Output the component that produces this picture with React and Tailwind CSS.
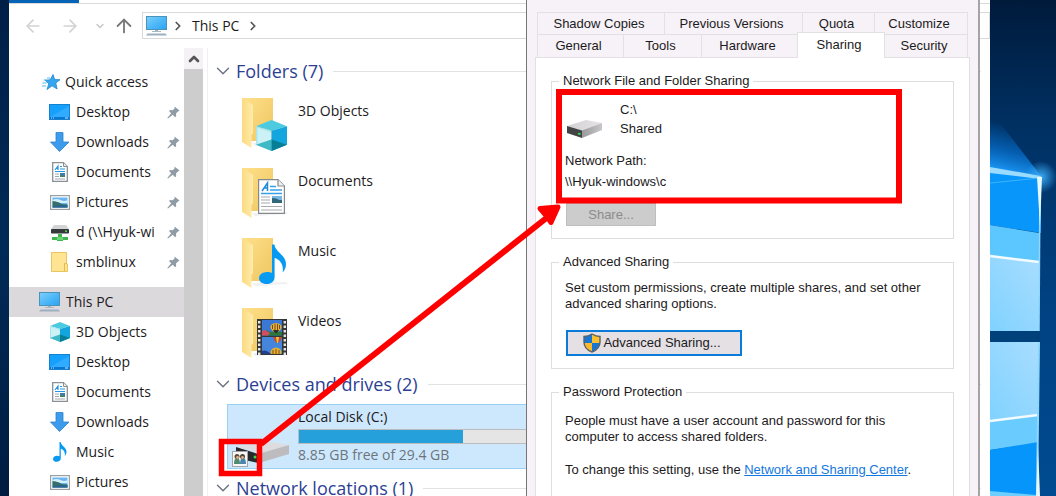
import { ArrowLeft, ArrowRight, ArrowUp, ChevronDown, ChevronRight, ChevronUp } from 'lucide-react'

function MonitorIcon({ className }) {
  return (
    <svg className={className} viewBox="0 0 21 20">
      <defs>
        <linearGradient id="screen" x1="0" y1="0" x2="1" y2="1">
          <stop offset="0" stopColor="#7fd0fb" />
          <stop offset="0.5" stopColor="#4fb9f8" />
          <stop offset="1" stopColor="#2ba3f2" />
        </linearGradient>
      </defs>
      <rect x="0.5" y="0.5" width="20" height="13" fill="url(#screen)" stroke="#4b93b8" />
      <rect x="9" y="14" width="3" height="1" fill="#9fb4c0" />
      <rect x="6" y="15" width="9" height="1" fill="#a9bac5" />
      <path d="M0 19.500l1.500-2h18l1.500 2z" fill="#9bb0c0" />
    </svg>
  )
}

function StarIcon({ className }) {
  return (
    <svg className={className} viewBox="0 0 18 16">
      <path d="M11 .5l1.700 5 5.300.2-4.200 3.400 1.300 5.900-5-3.200L5 15.500l1.800-5.700L3 6.200l5.200-.4z" fill="#35a5ee" stroke="#1e86d2" strokeWidth=".8" />
      <path d="M5 4h3M1.500 6h3M.5 9h4M0 12h4" stroke="#5cb9f3" />
    </svg>
  )
}

function DesktopIcon({ className }) {
  return (
    <svg className={className} viewBox="0 0 21 16">
      <rect x=".5" y=".5" width="20" height="15" fill="#15a0fb" stroke="#1681cf" />
      <path d="M1 13L20 2v11z" fill="#30abff" />
      <rect x="1" y="13" width="19" height="2" fill="#0878d3" />
      <path d="M2 14h1M4 14h1M16 14h3" stroke="#bfe5ff" />
    </svg>
  )
}

function DownloadIcon({ className }) {
  return (
    <svg className={className} viewBox="0 0 20 20">
      <path d="M6 .5h7v9.500h6L9.500 19.500.5 10H6z" fill="#3d9bed" stroke="#2b80cd" strokeWidth=".8" />
    </svg>
  )
}

function DocumentIcon({ className }) {
  return (
    <svg className={className} viewBox="0 0 16 20">
      <path d="M.7.7h10.800l3.800 3.800v14.800H.7z" fill="#fff" stroke="#8a9093" strokeWidth="1.300" />
      <path d="M11.500.7v3.800h3.800" fill="#e8eaeb" stroke="#8a9093" />
      <path d="M3 8l3-4v4M4 6.500h2M8 4.500h2M8 7h5M3 9.500h10" stroke="#2495e4" strokeWidth="1.200" fill="none" />
      <path d="M3 12h4M3 14.500h4M3 17h10" stroke="#9ba7b3" />
      <rect x="8" y="11" width="5" height="4" fill="#3c7fae" />
      <path d="M8 15v-2l5 1v1z" fill="#42835c" />
    </svg>
  )
}

function PictureIcon({ className }) {
  return (
    <svg className={className} viewBox="0 0 20 15">
      <rect x=".6" y=".6" width="18.800" height="13.800" fill="#fff" stroke="#999fa3" strokeWidth="1.200" />
      <rect x="2.500" y="2.500" width="15" height="10" fill="#68b5ef" />
      <path d="M2.500 5q4-2 8 0t7 0v3h-15z" fill="#d6effd" />
      <path d="M2.500 6q7 1 9 3l6 .5v3h-15z" fill="#356f6c" />
      <path d="M2.500 11.500q8-2 15-1v2h-15z" fill="#2c6396" />
    </svg>
  )
}

function NetDriveIcon({ className }) {
  return (
    <svg className={className} viewBox="0 0 18 17">
      <path d="M3 1h12l3 4H0z" fill="#d2d4d6" />
      <rect y="5" width="18" height="4.500" rx=".8" fill="#34383b" />
      <path d="M14 7.200h2" stroke="#5df35d" strokeWidth="1.200" />
      <path d="M7 10h4v3h6v3h-5v1H6v-1H1v-3h6z" fill="#3fb751" />
      <path d="M6 13h6v3H6z" fill="#68d473" />
    </svg>
  )
}

function SmallFolderIcon({ className }) {
  return (
    <svg className={className} viewBox="0 0 17 20">
      <path d="M.5.5h15V12h1v7.500H.5z" fill="#ffe493" stroke="#e7c65f" />
      <path d="M13.500 19V11.500h2.500" fill="none" stroke="#e2bd4e" />
    </svg>
  )
}

function CubeIcon({ className }) {
  return (
    <svg className={className} viewBox="0 0 20 20">
      <path d="M0 4L10 0l10 4-10 3z" fill="#4ccbe0" />
      <path d="M0 4l10 3v13L0 16z" fill="#a8e6ef" />
      <path d="M1 5l9 3v4.500l-9 3z" fill="#cdf2f6" />
      <path d="M20 4l-10 3v13l10-4z" fill="#12a5de" />
      <path d="M0 16l10-3.500V20z" fill="#3fb9c6" />
      <path d="M20 16l-10-3.500V20z" fill="#067f96" />
    </svg>
  )
}

function NoteIcon({ className }) {
  return (
    <svg className={className} viewBox="0 0 14 20">
      <path d="M6.500 0h1.200c.5 4 5.800 5.200 5.800 9.800 0 1.700-.6 3.200-1.700 4.200.7-3.800-1.300-6.500-4-7.200v9.500c0 2.200-1.800 3.500-4 3.500S0 18.600 0 16.900s1.800-3.100 4-3.100c1 0 1.800.2 2.500.5z" fill="#069af3" />
    </svg>
  )
}

function PinIcon({ className }) {
  return (
    <svg className={className} viewBox="0 0 13 13">
      <path d="M7.500.5L12.500 4.500 11 5.500l-2 2 .2 2.700-1 1L5.700 8.800 1 12.500.3 12l3.900-4.700L2 5l1-1 2.700.2 2-2z" fill="#8f9ca6" />
    </svg>
  )
}

function FilmIcon({ className }) {
  return (
    <svg className={className} viewBox="0 0 30 36">
      <rect width="30" height="36" fill="#343638" />
      <path d="M2.200 2v34M27.800 2v34" stroke="#e7e7e7" strokeWidth="2.400" strokeDasharray="2.500 2" />
      <rect x="5" y="1" width="20" height="15.500" fill="#3b78d6" />
      <rect x="5" y="18" width="20" height="17" fill="#4585dc" />
      <path d="M5 13l4-2 5 2 6-1 5 1v3.500H5z" fill="#277b3b" />
      <path d="M5 12l3-1 5 3-2 2.500H5z" fill="#d74c64" />
      <path d="M13.500 8c0-5 11-5 11 0 0 3-3.500 4.500-4 6h-3c-.5-1.500-4-3-4-6z" fill="#e8b32a" />
      <path d="M15.500 6v4M18 5v6M20.500 5v6M22.500 6v4" stroke="#7c4a20" />
      <path d="M16 11h6l-1.500 3h-3z" fill="#30302f" />
      <path d="M16 18h9q-1 4-4 6h-1q-3-2-4-6z" fill="#c44a32" />
      <path d="M19 18h3l-1 6h-1z" fill="#efc83a" />
      <path d="M13.500 34c0-7 11-7 11 0l-1 1h-9z" fill="#e8b32a" />
      <path d="M16 31v4M19 30v5M22 31v4" stroke="#7c4a20" />
      <path d="M5 32q4-2 9 3H5z" fill="#223f89" />
    </svg>
  )
}

function LargeDocumentIcon({ className }) {
  return (
    <svg className={className} viewBox="0 0 27 35">
      <path d="M.6.600h19.400l6.400 6.400v27.400H.6z" fill="#fff" stroke="#85898c" strokeWidth="1.200" />
      <path d="M20 .6V7h6.400" fill="#eef0f1" stroke="#85898c" strokeWidth="1.200" />
      <path d="M4 12L9.500 4v8M6 9h4" fill="none" stroke="#2089dc" strokeWidth="1.500" />
      <path d="M12 7.500h6M12 11h12M3 14.500h21" stroke="#37a1e8" strokeWidth="1.300" />
      <path d="M3 18h9M3 21h9M3 24h9M3 27.500h21M3 31h21" stroke="#a5a9ad" strokeWidth="1.200" />
      <rect x="14" y="17" width="10" height="7" fill="#79b7e2" />
      <path d="M14 19q5 0 7 2h3v3H14z" fill="#31677a" />
    </svg>
  )
}

function FolderIcon({ overlay: Overlay, overlayClass }) {
  return (
    <div className="relative h-[54px] w-[48px] shrink-0">
      <svg className="h-[54px] w-[48px]" viewBox="0 0 48 54">
        <defs>
          <linearGradient id="folderBack" x1="0" y1="0" x2="1" y2="1">
            <stop offset="0" stopColor="#ffe08a" />
            <stop offset="1" stopColor="#eec661" />
          </linearGradient>
          <linearGradient id="folderFront" x1="0" y1="0" x2="1" y2="0">
            <stop offset="0" stopColor="#fcdb80" />
            <stop offset="1" stopColor="#ffebac" />
          </linearGradient>
        </defs>
        <path d="M10 46l34-1 2 2-33 2z" fill="#f1f1f1" />
        <path d="M0 1h31v43H9z" fill="url(#folderBack)" />
        <path d="M0 1l11 7v28l-1.500 2v13L0 45z" fill="url(#folderFront)" />
      </svg>
      <Overlay className={overlayClass} />
    </div>
  )
}

function DiskIcon({ className }) {
  return (
    <svg className={className} viewBox="0 0 36 18">
      <defs>
        <linearGradient id="diskTop" x1="0" y1="0" x2="1" y2="0">
          <stop offset="0" stopColor="#d4d1d4" />
          <stop offset="1" stopColor="#e6e3e6" />
        </linearGradient>
        <linearGradient id="diskSide" x1="0" y1="0" x2="1" y2="0">
          <stop offset="0" stopColor="#9a999c" />
          <stop offset="1" stopColor="#c8c6c9" />
        </linearGradient>
      </defs>
      <path d="M0 6L19 0l16 3-20 8z" fill="url(#diskTop)" />
      <path d="M15 10.500L35 3v7l-20 8z" fill="url(#diskSide)" />
      <path d="M0 6l15 4.500V18L0 13z" fill="#414344" />
      <path d="M11 13.500l2.500.7" stroke="#3fe04a" strokeWidth="1.800" />
    </svg>
  )
}

function SharedDiskIcon({ className }) {
  return (
    <svg className={className} viewBox="0 0 58 26">
      <path d="M4 5L40 0l17 3-28 8z" fill="#dedcde" />
      <path d="M26 12l31-9v9L27 21z" fill="#bdbbbe" />
      <path d="M4 5l22 7v9L4 16z" fill="#27292a" />
      <circle cx="23" cy="15" r="1.500" fill="#37e047" />
      <rect x=".5" y="9.500" width="15" height="15" fill="#f7f7f7" stroke="#a5a5a5" />
      <path d="M2 22q0-6 3-6t3 6z" fill="#4e8b70" />
      <path d="M8 22q0-6 3-6t3 6z" fill="#4a86ab" />
      <circle cx="5" cy="14.500" r="2.500" fill="#5f4b36" />
      <circle cx="10.500" cy="14.500" r="2.500" fill="#4c4434" />
      <circle cx="5.500" cy="15.500" r="1.400" fill="#e1b28d" />
      <circle cx="10.500" cy="15.500" r="1.400" fill="#e1b28d" />
    </svg>
  )
}

function ShieldIcon({ className }) {
  return (
    <svg className={className} viewBox="0 0 18 20">
      <path d="M9 1Q5 3.500 1 3.500V10h8z" fill="#1976d2" />
      <path d="M9 1q4 2.500 8 2.500V10H9z" fill="#fbc02d" />
      <path d="M1 10h8v9Q2 16 1 10z" fill="#fbb92a" />
      <path d="M9 10h8q-1 6-8 9z" fill="#1976d2" />
      <path d="M9 1Q5 3.500 1 3.500V9q0 7 8 10 8-3 8-10V3.500Q13 3.500 9 1z" fill="none" stroke="#59636b" strokeWidth="1.400" />
    </svg>
  )
}

function Wallpaper() {
  return (
    <svg className="absolute top-0 right-0 h-[496px] w-[66px]" viewBox="0 0 66 496">
      <defs>
        <linearGradient id="night" x1="0" y1="0" x2="0" y2="1">
          <stop offset="0" stopColor="#001a3b" />
          <stop offset="0.25" stopColor="#003062" />
          <stop offset="0.6" stopColor="#004181" />
          <stop offset="1" stopColor="#004b91" />
        </linearGradient>
        <linearGradient id="glow" x1="0" y1="120" x2="-12" y2="168" gradientUnits="userSpaceOnUse">
          <stop offset="0" stopColor="#0878dc" stopOpacity="0" />
          <stop offset="0.5" stopColor="#0878dc" stopOpacity="0.6" />
          <stop offset="1" stopColor="#1ea0ff" />
        </linearGradient>
        <radialGradient id="flare" cx="51" cy="177" r="16" gradientUnits="userSpaceOnUse">
          <stop offset="0" stopColor="#3aa9f5" />
          <stop offset="1" stopColor="#3aa9f5" stopOpacity="0" />
        </radialGradient>
        <linearGradient id="pane" x1="0" y1="1" x2="1" y2="0">
          <stop offset="0" stopColor="#7fd2ff" />
          <stop offset="1" stopColor="#a9ddff" />
        </linearGradient>
      </defs>
      <rect width="66" height="496" fill="url(#night)" />
      <path d="M0 110L51 176 0 168z" fill="url(#glow)" />
      <rect x="35" y="161" width="31" height="32" fill="url(#flare)" />
      <path d="M0 167l51 9v57L0 225z" fill="#0996fb" />
      <path d="M0 167l51 9-1 3L0 173z" fill="#9adbff" />
      <path d="M0 183l50-5" stroke="#37b6ff" />
      <path d="M0 225l49 8v29l-49-6z" fill="#5cc6ff" />
      <path d="M0 256l49 6v69H0z" fill="url(#pane)" />
      <path d="M0 256l49 6" stroke="#f3fbff" strokeWidth="2.500" />
      <path d="M50 177l-1 154" stroke="#8fd7ff" strokeWidth="1.500" />
      <path d="M47 177h5l-2 50z" fill="#e6f8ff" />
      <rect y="331" width="50" height="11" fill="#00407b" />
      <path d="M0 342h49l-1 73-48 6z" fill="url(#pane)" />
      <path d="M0 421l48-6v28l-48 7z" fill="#6acbff" />
      <path d="M0 450l48-8-2 54H0z" fill="#0696fb" />
      <path d="M0 421l48-6" stroke="#f3fbff" strokeWidth="2.500" />
      <path d="M49 342l-2 154" stroke="#8fd7ff" strokeWidth="2" />
      <path d="M46 496l2-50 2 50z" fill="#e6f8ff" />
      <path d="M0 491l46 4v1H0z" fill="#6ccfff" />
    </svg>
  )
}

const quickAccess = [
  { label: 'Desktop', icon: DesktopIcon, size: 'h-[16px] w-[21px]' },
  { label: 'Downloads', icon: DownloadIcon, size: 'h-5 w-5' },
  { label: 'Documents', icon: DocumentIcon, size: 'h-5 w-4' },
  { label: 'Pictures', icon: PictureIcon, size: 'h-[15px] w-5' },
  { label: 'd (\\\\Hyuk-wi', icon: NetDriveIcon, size: 'h-[17px] w-[18px]' },
  { label: 'smblinux', icon: SmallFolderIcon, size: 'h-5 w-[17px]' },
]

const thisPc = [
  { label: '3D Objects', icon: CubeIcon, size: 'h-5 w-5' },
  { label: 'Desktop', icon: DesktopIcon, size: 'h-[16px] w-[21px]' },
  { label: 'Documents', icon: DocumentIcon, size: 'h-5 w-4' },
  { label: 'Downloads', icon: DownloadIcon, size: 'h-5 w-5' },
  { label: 'Music', icon: NoteIcon, size: 'h-5 w-[14px]' },
  { label: 'Pictures', icon: PictureIcon, size: 'h-[15px] w-5' },
]

const folders = [
  { label: '3D Objects', overlay: CubeIcon, overlayClass: 'absolute left-[14px] top-[23px] h-[31px] w-[31px]' },
  { label: 'Documents', overlay: LargeDocumentIcon, overlayClass: 'absolute left-[16px] top-[12px] h-[35px] w-[27px]' },
  { label: 'Music', overlay: NoteIcon, overlayClass: 'absolute left-[17px] top-[7px] h-[41px] w-[28px]' },
  { label: 'Videos', overlay: FilmIcon, overlayClass: 'absolute left-[15px] top-[12px] h-[36px] w-[30px]' },
]

const drive = { label: 'Local Disk (C:)', free: 8.85, total: 29.4 }

function NavItem({ item, pinned }) {
  const Icon = item.icon
  return (
    <button type="button" className="flex h-[30px] w-full items-center pl-10 text-left">
      <span className="flex w-[21px] shrink-0 justify-center"><Icon className={item.size} /></span>
      <span className="flex-1 pb-px pl-[6px] whitespace-nowrap">{item.label}</span>
      {pinned && <PinIcon className="mr-1 h-[13px] w-[13px] shrink-0" />}
    </button>
  )
}

function GroupHeading({ children }) {
  return (
    <h2 className="flex h-[30px] items-center gap-[2px] text-[18px] leading-6 text-[#2d3f94]">
      <ChevronDown className="-ml-1 h-[22px] w-[22px] shrink-0 text-gray-500" strokeWidth={1.5} />
      <span className="whitespace-nowrap">{children}</span>
      <span className="ml-2 h-px flex-1 bg-[#e2e2e2]" />
    </h2>
  )
}

function Explorer() {
  return (
    <main className="flex h-screen min-w-0 flex-1 flex-col bg-white font-['Open_Sans','Noto_Sans',sans-serif] text-[14px] text-[#1c1a1c]">
      <div className="h-1 shrink-0 border-b border-[#dadada]">
        <div className="h-[3px] w-[70px] bg-[#0663b6]" />
      </div>
      <div className="flex h-[44px] shrink-0 items-start pt-2">
        <div className="flex flex-1 items-center">
          <button type="button" aria-label="Back" className="ml-[14px] text-[#d2d2d2]"><ArrowLeft className="h-5 w-5" /></button>
          <button type="button" aria-label="Forward" className="ml-[17px] text-[#d2d2d2]"><ArrowRight className="h-5 w-5" /></button>
          <button type="button" aria-label="Recent locations" className="ml-[14px] text-[#c8c8c8]"><ChevronDown className="h-3 w-3" strokeWidth={3} /></button>
          <button type="button" aria-label="Up" className="mx-[7px] text-[#777]"><ArrowUp className="h-[22px] w-[22px]" /></button>
          <nav className="flex h-[27px] flex-1 items-center border border-[#d9d9d9] pl-[3px]">
            <MonitorIcon className="h-5 w-[21px]" />
            <ChevronRight className="ml-1 h-[14px] w-[14px] text-[#555]" strokeWidth={3} />
            <button type="button" className="mx-[7px]">This PC</button>
            <ChevronRight className="h-[14px] w-[14px] text-[#555]" strokeWidth={3} />
          </nav>
        </div>
      </div>
      <div className="flex min-h-0 flex-1">
        <aside className="w-[175px] shrink-0 overflow-hidden pt-[19px]">
          <button type="button" className="flex h-[30px] w-full items-center pl-[33px]">
            <StarIcon className="h-4 w-[18px]" />
            <span className="pb-px pl-[5px]">Quick access</span>
          </button>
          {quickAccess.map(item => <NavItem key={item.label} item={item} pinned />)}
          <button type="button" className="mt-[10px] flex h-[30px] w-full items-center bg-[#dcd9dc] pl-[30px]">
            <MonitorIcon className="h-5 w-[21px]" />
            <span className="pb-px pl-[6px]">This PC</span>
          </button>
          {thisPc.map(item => <NavItem key={item.label} item={item} />)}
        </aside>
        <div className="flex w-[19px] shrink-0 flex-col bg-[#cdcdcd]">
          <button type="button" aria-label="Scroll up" className="flex h-[21px] items-center justify-center bg-[#f5f2f6] text-[#555]"><ChevronUp className="h-4 w-4" strokeWidth={4} /></button>
        </div>
        <section className="ml-1 min-w-0 flex-1 overflow-hidden border-l border-[#f0f0f0] pl-2 pr-[9px] pt-2">
          <GroupHeading>Folders (7)</GroupHeading>
          <ul className="pb-[3px]">
            {folders.map(f => (
              <li key={f.label} className="flex h-[70px] items-start pl-[26px] pt-[11px]">
                <FolderIcon overlay={f.overlay} overlayClass={f.overlayClass} />
                <span className="pl-2 pt-[3px]">{f.label}</span>
              </li>
            ))}
          </ul>
          <GroupHeading>Devices and drives (2)</GroupHeading>
          <div className="mb-1 mt-[5px] ml-[11px] flex h-[65px] w-[320px] border border-[#99d1f5] bg-[#cde8fd]">
            <SharedDiskIcon className="mt-[37px] ml-1 h-[26px] w-[58px] shrink-0" />
            <div className="pl-2">
              <div className="h-[24px] leading-[23px]">{drive.label}</div>
              <div className="h-[15px] w-[236px] border border-[#bcbcbc] bg-[#e5e5e5]">
                <div className="h-full bg-[#26a0da]" style={{ width: `${(1 - drive.free / drive.total) * 100}%` }} />
              </div>
              <div className="text-[#6d747b] leading-[22px]">{drive.free} GB free of {drive.total} GB</div>
            </div>
          </div>
          <GroupHeading>Network locations (1)</GroupHeading>
        </section>
      </div>
    </main>
  )
}

function Tab({ className, selected, children }) {
  return (
    <button
      type="button"
      role="tab"
      aria-selected={!!selected}
      className={`flex items-center justify-center border-[#e3e0e4] pr-1 whitespace-nowrap ${className}`}
    >
      {children}
    </button>
  )
}

function Group({ title, className, children }) {
  return (
    <fieldset className={`min-w-0 border border-[#dedede] px-[13px] ${className}`}>
      <legend className="-ml-[6px] h-5 px-1 leading-5">{title}</legend>
      {children}
    </fieldset>
  )
}

function PropertiesDialog() {
  return (
    <div role="dialog" aria-label="Properties" className="absolute bottom-0 left-[526px] right-[76px] top-0 flex flex-col border-l border-r-2 border-l-[#77777b] border-r-[#a5a3a6] bg-[#f6f2f7] px-2 pt-3 font-['Liberation_Sans',Arial,sans-serif] text-[13px] text-[#1c1a1c]">
      <div role="tablist" className="shrink-0 px-[2px]">
        <div className="flex h-[22px] border-l border-t border-[#e3e0e4]">
          <Tab className="w-[127px] border-r">Shadow Copies</Tab>
          <Tab className="w-[138px] border-r">Previous Versions</Tab>
          <Tab className="w-[72px] border-r">Quota</Tab>
          <Tab className="flex-1 border-r">Customize</Tab>
        </div>
        <div className="flex h-[23px] items-end border-l border-[#e3e0e4]">
          <Tab className="h-[23px] w-[85px] border-t">General</Tab>
          <Tab className="h-[23px] w-[78px] border-l border-t">Tools</Tab>
          <Tab className="h-[23px] w-[96px] border-l border-t">Hardware</Tab>
          <Tab selected className="z-10 -mb-px h-[26px] w-[88px] border-x border-t bg-white pb-[2px]">Sharing</Tab>
          <Tab className="h-[23px] flex-1 border-r border-t">Security</Tab>
        </div>
      </div>
      <div role="tabpanel" className="flex min-h-0 flex-1 flex-col gap-[13px] overflow-hidden border-x border-t border-[#e3e0e4] bg-white px-[15px] pt-[13px]">
        <Group title="Network File and Folder Sharing" className="h-[168px] shrink-0 pt-[9px]">
          <div className="flex items-center gap-[17px] pl-[2px] leading-[19px]">
            <DiskIcon className="mt-5 h-[18px] w-9" />
            <div>
              <p>C:\</p>
              <p>Shared</p>
            </div>
          </div>
          <div className="pt-[12px] leading-[21px]">
            <p>Network Path:</p>
            <p>\\Hyuk-windows\c</p>
          </div>
          <button type="button" disabled className="mt-[11px] ml-px block h-[23px] w-[90px] border border-[#bfbfbf] bg-[#cccccc] text-[#8b8b8b]">Share...</button>
        </Group>
        <Group title="Advanced Sharing" className="h-[117px] shrink-0 pt-2">
          <p className="leading-4">Set custom permissions, create multiple shares, and set other<br />advanced sharing options.</p>
          <button type="button" className="mt-[18px] ml-px flex h-[26px] w-[176px] items-center justify-center gap-[2px] border-2 border-[#0a7bd8] bg-[#e4e0e4] pr-1">
            <ShieldIcon className="h-5 w-[18px]" />
            Advanced Sharing...
          </button>
        </Group>
        <Group title="Password Protection" className="h-[160px] shrink-0 pt-[11px]">
          <p className="leading-4">People must have a user account and password for this<br />computer to access shared folders.</p>
          <p className="mt-[17px] leading-4">To change this setting, use the <a href="#network" className="text-[#1477e0] underline">Network and Sharing Center</a>.</p>
        </Group>
      </div>
    </div>
  )
}

// red call-outs that link the drive to its share settings
function Annotations() {
  return (
    <svg className="pointer-events-none absolute left-0 top-0 z-20 h-[496px] w-[1056px]" viewBox="0 0 1056 496" fill="none" stroke="#ff0000">
      <rect x="221.500" y="441.500" width="38" height="32" strokeWidth="5.500" />
      <rect x="559" y="92" width="340" height="108.500" strokeWidth="6" />
      <path d="M261 444L554 212" strokeWidth="6" />
      <path d="M540 208.500l18-1.500-7 15.500-4-6z" fill="#ff0000" strokeWidth="5" strokeLinejoin="round" />
    </svg>
  )
}

export default function App() {
  return (
    <div className="relative flex h-screen overflow-hidden bg-gradient-to-b from-[#001f47] via-[#002b57] to-[#001c40] pl-[9px] pr-[66px]">
      <Wallpaper />
      <Explorer />
      <PropertiesDialog />
      <Annotations />
    </div>
  )
}
